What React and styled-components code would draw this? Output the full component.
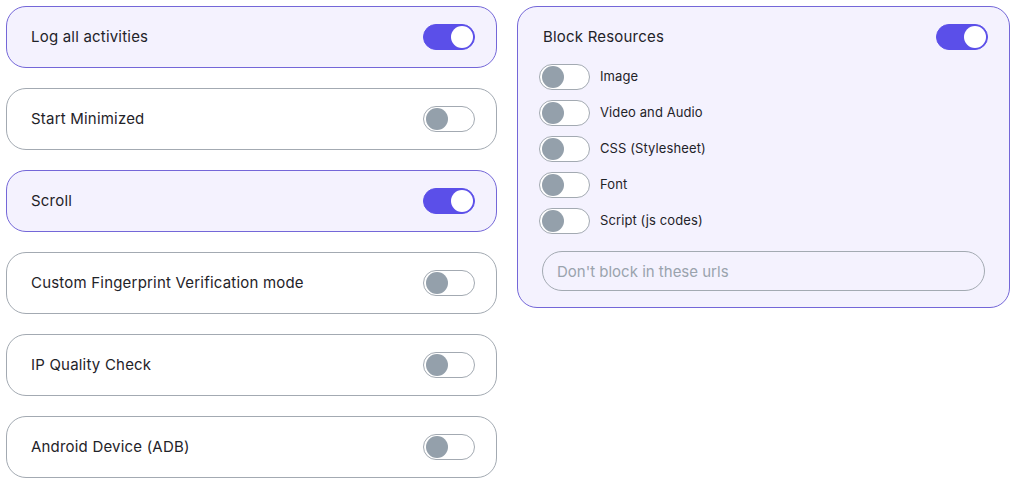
import React, { useState } from 'react';
import styled, { createGlobalStyle } from 'styled-components';

const GlobalStyle = createGlobalStyle`
  * { box-sizing: border-box; }
  body {
    margin: 0;
    background: #ffffff;
    font-family: Inter, "Noto Sans", sans-serif;
    color: #1f2329;
  }
`;

const Page = styled.div`
  display: flex;
  align-items: flex-start;
  gap: 20px;
  padding: 6px;
`;

const Column = styled.div`
  display: flex;
  flex-direction: column;
  gap: 20px;
  width: 491px;
`;

const Card = styled.div`
  display: flex;
  align-items: center;
  justify-content: space-between;
  height: 62px;
  padding: 0 21px 0 24px;
  border-radius: 20px;
  border: 1px solid ${({ active }) => (active ? '#7467d8' : '#a3aab2')};
  background: ${({ active }) => (active ? '#f4f2fe' : '#ffffff')};
`;

const Label = styled.span`
  font-size: 15px;
  font-weight: 400;
  letter-spacing: 0.2px;
  margin-top: -2px;
`;

const Track = styled.button`
  position: relative;
  flex: none;
  width: ${({ small }) => (small ? '51px' : '52px')};
  height: 26px;
  padding: 0;
  border-radius: 13px;
  cursor: pointer;
  border: 1px solid ${({ on }) => (on ? '#5b4fe9' : '#a3aab2')};
  background: ${({ on }) => (on ? '#5b4fe9' : '#ffffff')};
`;

const Knob = styled.span`
  position: absolute;
  top: 1px;
  left: ${({ on }) => (on ? '27px' : '2px')};
  width: 22px;
  height: 22px;
  border-radius: 50%;
  background: ${({ on }) => (on ? '#ffffff' : '#94a0ab')};
`;

const Toggle = ({ on, onChange, small }) => (
  <Track on={on} small={small} onClick={onChange}>
    <Knob on={on} />
  </Track>
);

const Panel = styled.div`
  width: 493px;
  padding: 17px 21px 16px 21px;
  border-radius: 20px;
  border: 1px solid #7467d8;
  background: #f4f2fe;
`;

const PanelHead = styled.div`
  display: flex;
  align-items: center;
  justify-content: space-between;
  padding-left: 4px;
  margin-bottom: 14px;
`;

const ResourceList = styled.div`
  display: flex;
  flex-direction: column;
  gap: 10px;
`;

const ResourceRow = styled.div`
  display: flex;
  align-items: center;
  gap: 10px;
`;

const ResourceLabel = styled.span`
  font-size: 13px;
  font-weight: 400;
  letter-spacing: 0.1px;
  margin-top: -2px;
`;

const UrlInput = styled.input`
  display: block;
  width: 443px;
  height: 40px;
  margin: 17px 0 0 3px;
  padding: 0 14px;
  border-radius: 20px;
  border: 1px solid #a3aab2;
  background: transparent;
  font-family: inherit;
  font-size: 15px;
  color: #1f2329;
  outline: none;
  &::placeholder { color: #9aa3ad; }
`;

const settings = [
  ['Log all activities', true],
  ['Start Minimized', false],
  ['Scroll', true],
  ['Custom Fingerprint Verification mode', false],
  ['IP Quality Check', false],
  ['Android Device (ADB)', false],
];

const resources = ['Image', 'Video and Audio', 'CSS (Stylesheet)', 'Font', 'Script (js codes)'];

export default function App() {
  const [values, setValues] = useState(settings.map((s) => s[1]));
  const [block, setBlock] = useState(true);
  const [res, setRes] = useState(resources.map(() => false));

  const flip = (arr, set, i) => set(arr.map((v, j) => (j === i ? !v : v)));

  return (
    <>
      <GlobalStyle />
      <Page>
        <Column>
          {settings.map(([name], i) => (
            <Card key={name} active={values[i]}>
              <Label>{name}</Label>
              <Toggle on={values[i]} onChange={() => flip(values, setValues, i)} />
            </Card>
          ))}
        </Column>
        <Panel>
          <PanelHead>
            <Label>Block Resources</Label>
            <Toggle on={block} onChange={() => setBlock(!block)} />
          </PanelHead>
          <ResourceList>
            {resources.map((name, i) => (
              <ResourceRow key={name}>
                <Toggle small on={res[i]} onChange={() => flip(res, setRes, i)} />
                <ResourceLabel>{name}</ResourceLabel>
              </ResourceRow>
            ))}
          </ResourceList>
          <UrlInput placeholder="Don't block in these urls" />
        </Panel>
      </Page>
    </>
  );
}
